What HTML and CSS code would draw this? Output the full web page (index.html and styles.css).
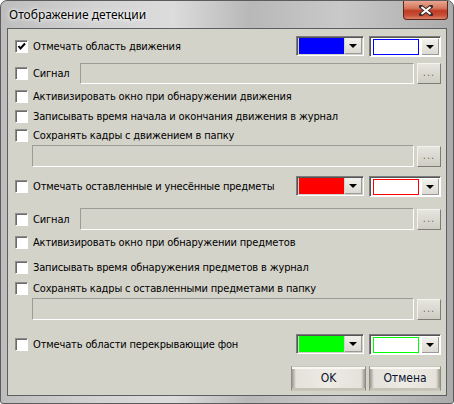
FILE: index.html
```html
<!DOCTYPE html>
<html lang="ru">
<head>
    <meta charset="UTF-8">
    <title>Отображение детекции</title>
    <link rel="stylesheet" href="styles.css">
</head>
<body>
    <div class="window">
        <div class="titlebar">
            <span class="title">Отображение детекции</span>
            <div class="close">
                <svg width="14" height="11" viewBox="0 0 14 11">
                    <path d="M2 1.5 L12 9.5 M12 1.5 L2 9.5" stroke="#3b2a28" stroke-width="4" stroke-linecap="round"/>
                    <path d="M2.5 2 L11.5 9 M11.5 2 L2.5 9" stroke="#ffffff" stroke-width="2.2"/>
                </svg>
            </div>
        </div>

        <div class="client">
            <!-- движение -->
            <div class="row r1">
                <label class="check"><span class="box"><svg width="11" height="11" viewBox="0 0 11 11"><path d="M2.5 5 L4.5 7.5 L9 2.5" stroke="#000" stroke-width="2" fill="none"/></svg></span>Отмечать область движения</label>
                <div class="combos">
                    <div class="combo"><span class="fill" style="background:#0000ff"></span><span class="drop"><i></i></span></div>
                    <div class="combo combo-alt"><span class="fill frame" style="border-color:#0000ff"></span><span class="drop"><i></i></span></div>
                </div>
            </div>
            <div class="row r2">
                <label class="check short"><span class="box"></span>Сигнал</label>
                <div class="field"></div>
                <div class="dots">...</div>
            </div>
            <div class="row r3">
                <label class="check"><span class="box"></span>Активизировать окно при обнаружении движения</label>
            </div>
            <div class="row r4">
                <label class="check"><span class="box"></span>Записывать время начала и окончания движения в журнал</label>
            </div>
            <div class="row r5">
                <label class="check"><span class="box"></span>Сохранять кадры с движением в папку</label>
            </div>
            <div class="row r6 indent">
                <div class="field"></div>
                <div class="dots">...</div>
            </div>

            <!-- предметы -->
            <div class="row r7">
                <label class="check"><span class="box"></span>Отмечать оставленные и унесённые предметы</label>
                <div class="combos">
                    <div class="combo"><span class="fill" style="background:#ff0000"></span><span class="drop"><i></i></span></div>
                    <div class="combo combo-alt"><span class="fill frame" style="border-color:#ff0000"></span><span class="drop"><i></i></span></div>
                </div>
            </div>
            <div class="row r8">
                <label class="check short"><span class="box"></span>Сигнал</label>
                <div class="field"></div>
                <div class="dots">...</div>
            </div>
            <div class="row r9">
                <label class="check"><span class="box"></span>Активизировать окно при обнаружении предметов</label>
            </div>
            <div class="row r10">
                <label class="check"><span class="box"></span>Записывать время обнаружения предметов в журнал</label>
            </div>
            <div class="row r11">
                <label class="check"><span class="box"></span>Сохранять кадры с оставленными предметами в папку</label>
            </div>
            <div class="row r12 indent">
                <div class="field"></div>
                <div class="dots">...</div>
            </div>

            <!-- фон -->
            <div class="row r13">
                <label class="check"><span class="box"></span>Отмечать области перекрывающие фон</label>
                <div class="combos">
                    <div class="combo"><span class="fill" style="background:#00ff00"></span><span class="drop"><i></i></span></div>
                    <div class="combo combo-alt"><span class="fill frame" style="border-color:#00ff00"></span><span class="drop"><i></i></span></div>
                </div>
            </div>

            <div class="buttons">
                <div class="btn ok">OK</div>
                <div class="btn cancel">Отмена</div>
            </div>
        </div>
    </div>
</body>
</html>
```

FILE: styles.css
```css
body {
    margin: 0;
    background-color: #ffffff;
    font-family: "DejaVu Sans Condensed", "DejaVu Sans", sans-serif;
    font-size: 11px;
    letter-spacing: -0.15px;
    color: #000000;
}
.window {
    width: 454px;
    height: 404px;
    box-sizing: border-box;
    border: 1px solid #5c5c5c;
    border-radius: 7px 7px 3px 3px;
    background: linear-gradient(90deg, #bdbdbd 0%, #d2d2d2 20%, #dcdcdc 38%, #b8b8b8 55%, #c9c9c9 75%, #ababab 100%);
    padding: 0 6px 7px 6px;
}
.titlebar {
    height: 27px;
    display: flex;
    align-items: flex-start;
    justify-content: space-between;
}
.title {
    font-family: "Noto Sans", "Open Sans", sans-serif;
    font-size: 12px;
    letter-spacing: 0;
    margin: 5px 0 0 2px;
    color: #000000;
    text-shadow: 0 0 6px #ffffff, 0 0 3px #ffffff;
}
.close {
    width: 45px;
    height: 19px;
    margin-right: -1px;
    box-sizing: border-box;
    border: 1px solid #5a2720;
    border-top: none;
    border-radius: 0 0 4px 4px;
    background: linear-gradient(180deg, #e8a791 0%, #d6765e 40%, #bf3b22 55%, #c9503a 80%, #dc8366 100%);
    display: flex;
    align-items: center;
    justify-content: center;
}
.client {
    height: 368px;
    box-sizing: border-box;
    border: 1px solid #5e5e5e;
    background-color: #d4d3ca;
    padding: 7px 5px 0 7px;
}
.row {
    display: flex;
    align-items: center;
    height: 20px;
}
.r2 { margin-top: 7px; height: 21px; }
.r3 { margin-top: 2px; }
.r5 { height: 19px; }
.r6 { height: 22px; }
.r7 { margin-top: 9px; }
.r8 { margin-top: 12px; height: 22px; }
.r9 { margin-top: 2px; }
.r10 { margin-top: 5px; }
.r11 { margin-top: 1px; }
.r12 { height: 22px; }
.r13 { margin-top: 14px; }
.indent {
    padding-left: 17px;
}
.check {
    display: flex;
    align-items: center;
    white-space: nowrap;
}
.check.short {
    width: 65px;
}
.box {
    width: 13px;
    height: 13px;
    box-sizing: border-box;
    margin-right: 5px;
    background-color: #ffffff;
    border: 1px solid;
    border-color: #8d8d8d #ffffff #ffffff #8d8d8d;
    box-shadow: inset 1px 1px 0 #6b6b6b;
    display: flex;
    align-items: center;
    justify-content: center;
}
.combos {
    margin-left: auto;
    display: flex;
    gap: 5px;
}
.combo {
    width: 68px;
    height: 20px;
    box-sizing: border-box;
    border: 1px solid;
    border-color: #7b7b7b #ffffff #ffffff #7b7b7b;
    box-shadow: inset 1px 1px 0 #555555;
    padding: 1px 1px 1px 2px;
    display: flex;
    gap: 1px;
}
.combo-alt {
    width: 72px;
    height: 21px;
    background-color: #ffffff;
    padding: 2px 1px 1px 3px;
    gap: 3px;
}
.fill {
    flex: 1;
}
.frame {
    border: 1px solid;
    background-color: #ffffff;
}
.drop {
    width: 17px;
    box-sizing: border-box;
    background: linear-gradient(180deg, #f2f1ec, #dcdad2);
    border-right: 1px solid #9a9a9a;
    border-bottom: 1px solid #9a9a9a;
    display: flex;
    align-items: center;
    justify-content: center;
}
.drop i {
    width: 0;
    height: 0;
    border-left: 4px solid transparent;
    border-right: 4px solid transparent;
    border-top: 4px solid #000000;
    margin-top: 1px;
}
.field {
    flex: 1;
    align-self: stretch;
    box-sizing: border-box;
    border: 1px solid;
    border-color: #9c9c96 #ffffff #ffffff #9c9c96;
    margin-right: 3px;
}
.dots {
    width: 24px;
    height: 21px;
    box-sizing: border-box;
    border: 1px solid;
    border-color: #f4f3ee #7c7c78 #7c7c78 #f4f3ee;
    background: linear-gradient(180deg, #e6e5de, #cfcdc3);
    color: #6f6c62;
    font-size: 11px;
    text-align: center;
    line-height: 18px;
    letter-spacing: 1px;
}
.buttons {
    display: flex;
    justify-content: flex-end;
    gap: 3px;
    margin-top: 12px;
}
.btn {
    height: 25px;
    box-sizing: border-box;
    border: 1px solid #c9c6bb;
    border-left-color: #8e8c84;
    border-right-color: #8e8c84;
    background: linear-gradient(90deg, #9a978e 0, #e4e2da 4px, #ecebe4 50%, #e4e2da calc(100% - 4px), #9a978e 100%);
    box-shadow: inset 0 2px 0 #f8f7f3, inset 0 -2px 0 #c4c1b6;
    font-size: 12px;
    letter-spacing: 0;
    color: #0a1230;
    text-align: center;
    line-height: 23px;
}
.ok { width: 75px; }
.cancel { width: 72px; }
```
